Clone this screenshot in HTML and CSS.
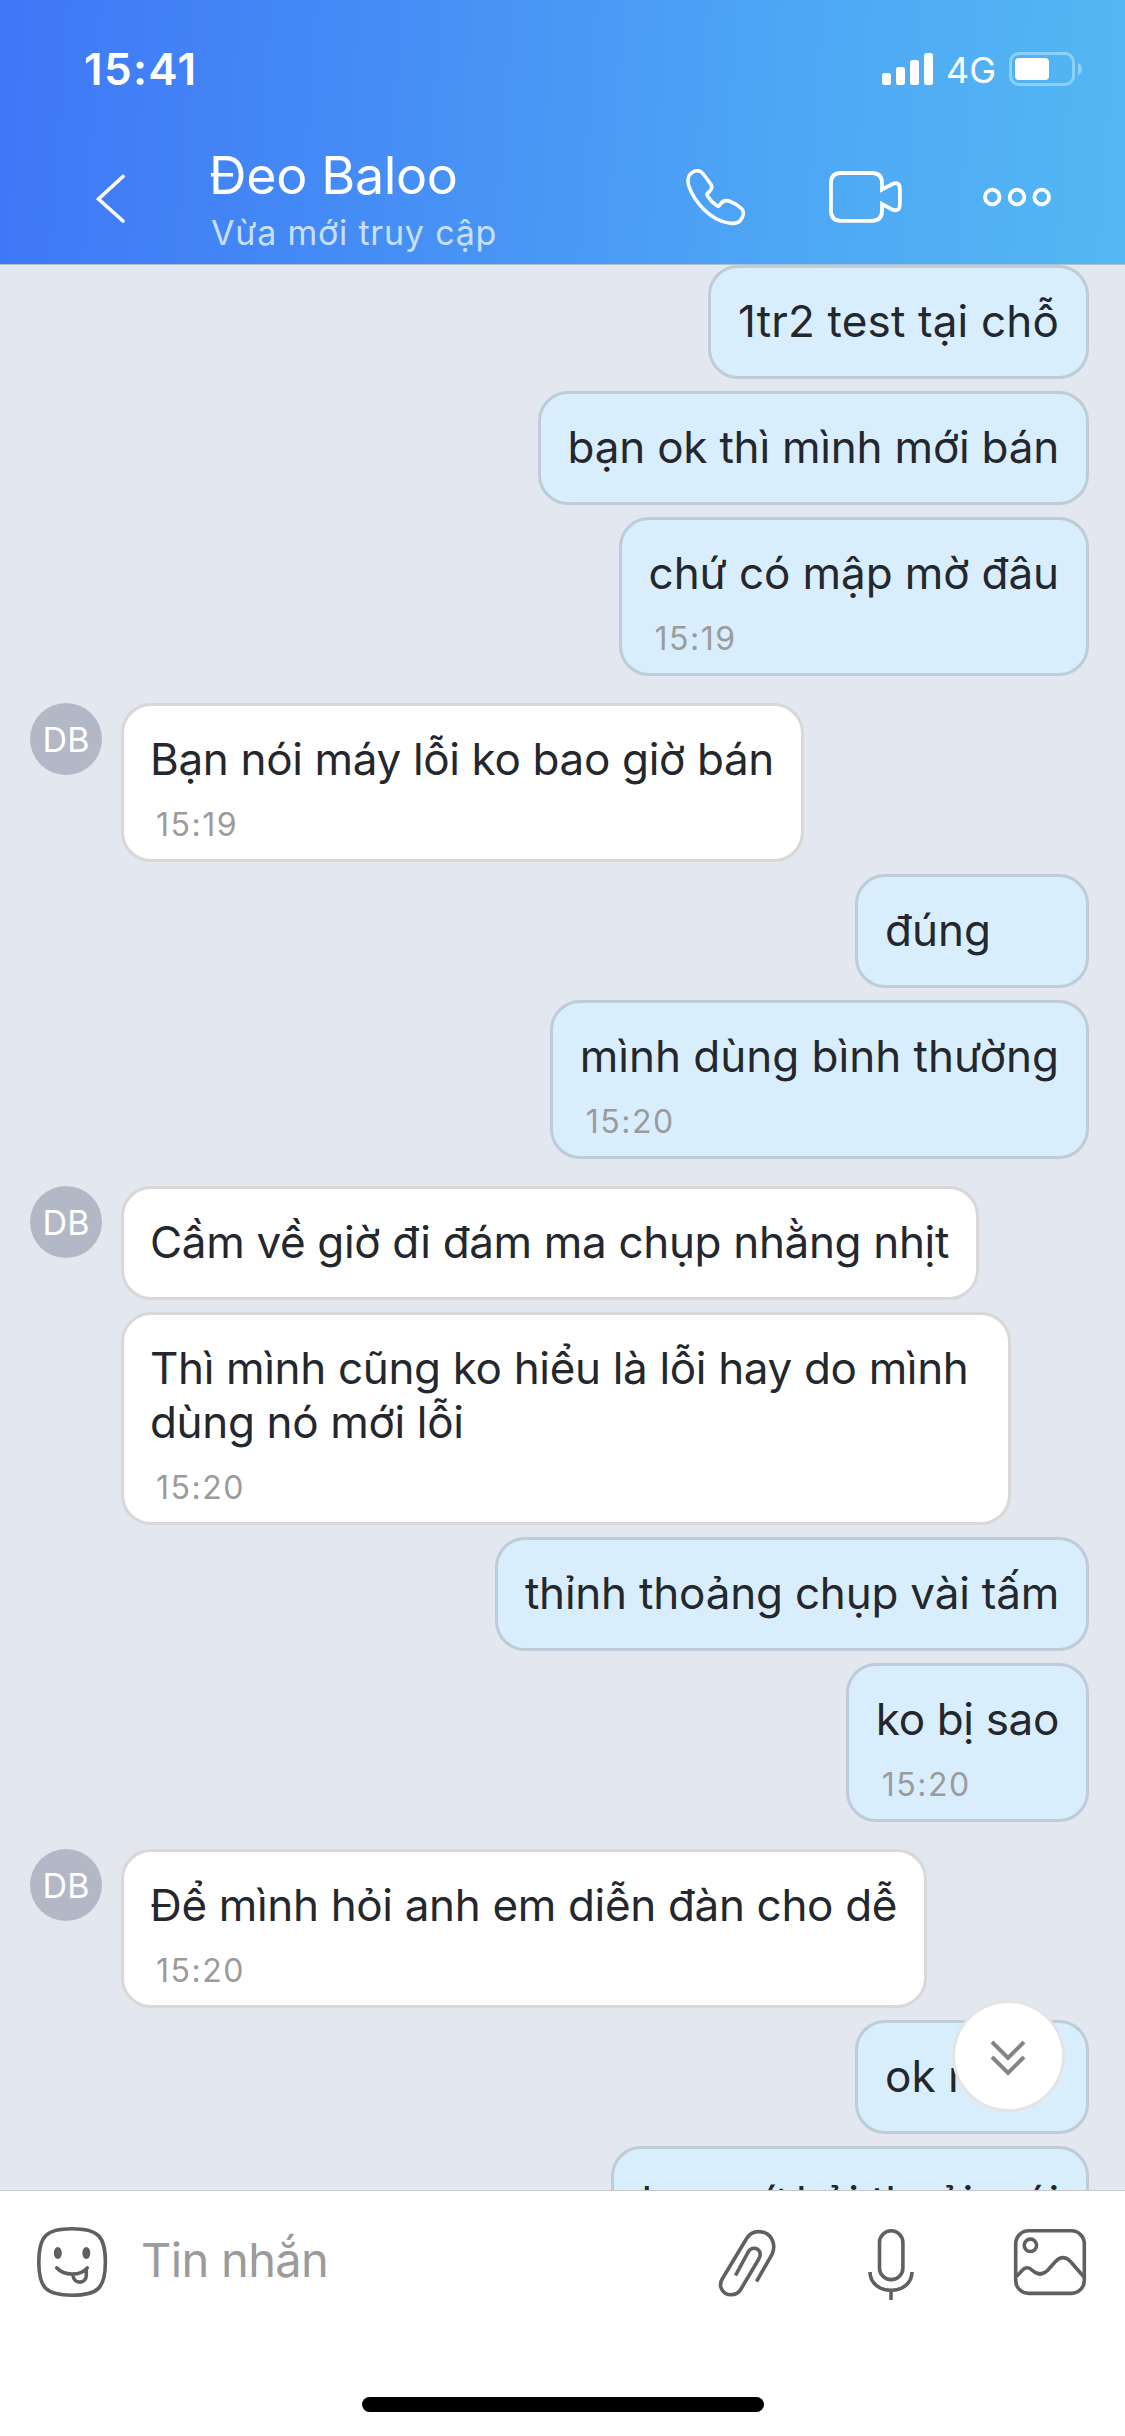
FILE: index.html
```
<!DOCTYPE html>
<html lang="vi">
<head>
<meta charset="utf-8">
<title>Đeo Baloo</title>
<link rel="stylesheet" href="styles.css">
</head>
<body>
<div class="screen">
  <header class="header">
    <div class="status">
      <span class="clock">15:41</span>
      <div class="status-right">
        <svg class="signal" width="52" height="32" viewBox="0 0 52 32" fill="#fff">
          <rect x="0" y="20" width="9" height="12" rx="2.5"/><rect x="14" y="14" width="9" height="18" rx="2.5"/><rect x="28" y="7" width="9" height="25" rx="2.5"/><rect x="42" y="0" width="9" height="32" rx="2.5"/>
        </svg>
        <span class="network">4G</span>
        <svg class="battery" width="74" height="34" viewBox="0 0 74 34">
          <rect x="1.5" y="1.5" width="63" height="31" rx="8.5" fill="none" stroke="#8dd0f9" stroke-width="3"/>
          <rect x="6" y="6" width="34" height="22" rx="4" fill="#fff"/>
          <path d="M69 11q4 2 4 6t-4 6z" fill="#8dd0f9"/>
        </svg>
      </div>
    </div>
    <div class="nav">
      <svg class="back" width="32" height="50" viewBox="0 0 32 50" fill="none" stroke="#fff" stroke-width="3.6" stroke-linecap="round" stroke-linejoin="miter"><path d="M28 2.500L3.500 25L28 47"/></svg>
      <div class="contact">
        <div class="name">Đeo Baloo</div>
        <div class="presence">Vừa mới truy cập</div>
      </div>
      <div class="actions">
        <svg width="64" height="60" viewBox="684 168 64 60" fill="none" stroke="#fff" stroke-width="3.6" stroke-linejoin="round"><path d="M692.500 173.300C696.500 170.800 700.500 171.500 702.800 174.500C706 178.500 708.500 182 711 185.500C712.500 188 711.500 190.500 709.500 192.500C706.500 195 706.500 195 707.500 197C710 201 713 204.200 717 206.800C718.500 207.800 719.500 207 720.500 205C722.500 202 726 201 729.500 202.200C734 204 738 206.500 741.500 209.500C744.500 212.500 743.500 217.500 740.500 221.300C738 224.300 734 224.700 730 224.200C709 221.500 693.500 201 688.500 186C687 181 688.500 176 692.500 173.300Z"/></svg>
        <svg width="76" height="56" viewBox="827 170 76 56" fill="none" stroke="#fff" stroke-width="3.8" stroke-linejoin="miter"><path d="M882 190.500V184Q882 174 872 174H841Q831 174 831 184V211.800Q831 221.800 841 221.800H872Q882 221.800 882 211.800V205L892.500 210.600Q899.900 213.300 899.900 205V190.500Q899.900 182 892.500 185Z"/></svg>
        <svg width="70" height="22" viewBox="982 186 70 22" fill="none" stroke="#fff" stroke-width="3.8"><circle cx="992.300" cy="197" r="7.300"/><circle cx="1017" cy="197" r="7.300"/><circle cx="1041.700" cy="197" r="7.300"/></svg>
      </div>
    </div>
  </header>

  <main class="chat">
    <div class="group mine">
      <div class="bubble loose"><p>1tr2 test tại chỗ</p></div>
      <div class="bubble snug"><p>bạn ok thì mình mới bán</p></div>
      <div class="bubble timed close"><p>chứ có mập mờ đâu</p><time>15:19</time></div>
    </div>
    <div class="group theirs">
      <div class="avatar">DB</div>
      <div class="stack"><div class="bubble timed tight"><p>Bạn nói máy lỗi ko bao giờ bán</p><time>15:19</time></div></div>
    </div>
    <div class="group mine">
      <div class="bubble"><p>đúng</p></div>
      <div class="bubble timed"><p>mình dùng bình thường</p><time>15:20</time></div>
    </div>
    <div class="group theirs">
      <div class="avatar">DB</div>
      <div class="stack">
        <div class="bubble tight"><p>Cầm về giờ đi đám ma chụp nhằng nhịt</p></div>
        <div class="bubble timed tight full"><p>Thì mình cũng ko hiểu là lỗi hay do mình dùng nó mới lỗi</p><time>15:20</time></div>
      </div>
    </div>
    <div class="group mine">
      <div class="bubble snug"><p>thỉnh thoảng chụp vài tấm</p></div>
      <div class="bubble timed tight"><p>ko bị sao</p><time>15:20</time></div>
    </div>
    <div class="group theirs">
      <div class="avatar">DB</div>
      <div class="stack"><div class="bubble timed tight"><p>Để mình hỏi anh em diễn đàn cho dễ</p><time>15:20</time></div></div>
    </div>
    <div class="group mine">
      <div class="bubble"><p>ok nha</p></div>
      <div class="bubble close"><p>bạn cứ hỏi thoải mái</p></div>
    </div>
    <button class="to-bottom" aria-label="Xuống cuối">
      <svg width="36" height="38" viewBox="0 0 36 38" fill="none" stroke="#858585" stroke-width="4"><path d="M2 2L18 18L34 2M2 17L18 33L34 17"/></svg>
    </button>
  </main>

  <footer class="composer">
    <div class="row">
      <svg width="72" height="72" viewBox="36 2226 72 72" fill="none" stroke="#606060" stroke-width="3.600" stroke-linecap="round" stroke-linejoin="round">
        <path d="M72 2228.800C98 2228.800 105.400 2236 105.400 2262S98 2295.200 72 2295.200S38.800 2288 38.800 2262S46 2228.800 72 2228.800Z"/>
        <ellipse cx="57.800" cy="2253" rx="4" ry="6" fill="#606060" stroke="none"/><ellipse cx="86.300" cy="2253" rx="4" ry="6" fill="#606060" stroke="none"/>
        <path d="M56.700 2267.800C64 2276 80 2276.500 87.300 2267.800M73 2275C73.500 2285 86.500 2284 86.300 2275V2270"/>
      </svg>
      <span class="placeholder">Tin nhắn</span>
      <div class="tools">
        <svg width="60" height="74" viewBox="717 2227 60 74" fill="none" stroke="#606060" stroke-width="3.600"><path d="M756.500 2281.500L772 2254.500C777 2243 770.500 2231.600 758.300 2231.600C753 2231.600 748.500 2235 746 2239.500L722.500 2278.500C717.500 2286.500 723 2294.800 731 2294.800C735.500 2294.800 739 2292.500 741 2289L758.500 2259.500C762.500 2253 758.500 2248.200 754 2248.200C751.500 2248.200 749.800 2249.500 748.500 2251.500L735.500 2275.500"/></svg>
        <svg width="48" height="74" viewBox="867 2227 48 74" fill="none" stroke="#606060" stroke-width="3.600"><rect x="879.500" y="2230.800" width="23.400" height="48.800" rx="11.700"/><path d="M870 2272C870 2283 879.500 2290.300 891 2290.300S912 2283 912 2272M891 2290V2300"/></svg>
        <svg width="76" height="74" viewBox="1012 2227 76 74" fill="none" stroke="#606060" stroke-width="3.600"><rect x="1015.700" y="2230.800" width="68.600" height="62.600" rx="13"/><circle cx="1030.400" cy="2245.300" r="6.200"/><path d="M1016.500 2276.500L1022 2270.500Q1027 2265 1032.500 2270.500Q1040 2277.500 1047.500 2270.500L1055.500 2261.500Q1063 2254 1070.500 2261.500L1084 2277"/></svg>
      </div>
    </div>
    <div class="home"></div>
  </footer>
</div>
</body>
</html>
```
FILE: styles.css
```
* { box-sizing: border-box; }
body { margin: 0; font-family: Inter, "Noto Sans", sans-serif; }
svg { display: block; flex: none; }

.screen { width: 1125px; height: 2436px; display: flex; flex-direction: column; overflow: hidden; background: #fff; }

/* Header */
.header { flex: none; height: 265px; border-bottom: 1px solid #aebfce; background: linear-gradient(94deg, #3f77f7 0%, #4489f5 28%, #4a9af5 52%, #4faaf5 75%, #53b8f2 100%); color: #fff; }
.status { height: 132px; padding: 42px 42px 0 84px; display: flex; justify-content: space-between; align-items: flex-start; }
.clock { font-size: 44px; line-height: 54px; font-weight: 600; letter-spacing: 1.3px; }
.status-right { display: flex; align-items: flex-start; padding-top: 10px; }
.signal { margin-top: 1px; margin-right: 12px; }
.network { width: 52px; margin: -4px 11px 0 0; font-size: 36px; line-height: 44px; font-weight: 400; }
.nav { display: flex; align-items: flex-start; padding: 12px 73px 0 95px; }
.back { margin-top: 30px; }
.contact { margin-left: 82px; }
.name { font-size: 52px; line-height: 64px; letter-spacing: -.35px; }
.presence { margin-top: 4px; margin-left: 2px; font-size: 34px; line-height: 42px; letter-spacing: .8px; color: #c9e0fd; }
.actions { margin-left: auto; padding-top: 23px; display: flex; align-items: center; height: 83px; }
.actions svg + svg { margin-left: 79px; }

/* Conversation */
.chat { position: relative; flex: none; height: 1925px; overflow: hidden; padding-right: 36px; display: flex; flex-direction: column; background: #e2e7f0; color: #24272c; }
.group { flex: none; display: flex; }
.mine { flex-direction: column; align-items: flex-end; gap: 12px; }
.theirs { margin: 27px 0 12px; padding-left: 30px; gap: 19px; }
.stack { display: flex; flex-direction: column; align-items: flex-start; gap: 12px; }
.avatar { flex: none; width: 72px; height: 72px; border-radius: 50%; background: #b3b8c6; color: #fff; font-size: 34px; line-height: 73px; text-align: center; }
.bubble { min-width: 234px; padding: 26px 27px 28px; border: 3px solid #d8d8d8; border-radius: 30px; background: #fff; }
.theirs .bubble { padding-left: 26px; }
.mine .bubble { border-color: #bdccd6; background: #d9eefd; }
.bubble.timed { padding-bottom: 15px; }
.bubble p { margin: 0; font-size: 44px; line-height: 54px; }
.bubble time { display: block; margin: 19px 0 0 6px; font-size: 32px; line-height: 39px; letter-spacing: 1.5px; color: #9b9b9b; }
.loose p { letter-spacing: .16px; }
.close p { letter-spacing: -.1px; }
.snug p { letter-spacing: -.21px; }
.tight p { letter-spacing: -.34px; }
.full { width: 890px; }

.to-bottom { position: absolute; left: 952px; top: 1735px; width: 113px; height: 112px; padding: 6px 1px 0 0; border: 3px solid #e4e4e4; border-radius: 50%; background: #fff; display: flex; align-items: center; justify-content: center; }

/* Composer */
.composer { flex: 1; display: flex; flex-direction: column; justify-content: space-between; align-items: center; border-top: 1px solid #c8c8cb; padding-bottom: 24px; }
.row { width: 100%; padding: 35px 37px 0 36px; display: flex; align-items: flex-start; }
.placeholder { margin: 5px 0 0 33px; font-size: 47px; line-height: 58px; letter-spacing: -.65px; color: #9b9b9b; }
.tools { margin: 1px 0 0 auto; display: flex; }
.tools svg:nth-child(2) { margin: 0 97px 0 90px; }
.home { width: 402px; height: 15px; border-radius: 8px; background: #000; }
```
